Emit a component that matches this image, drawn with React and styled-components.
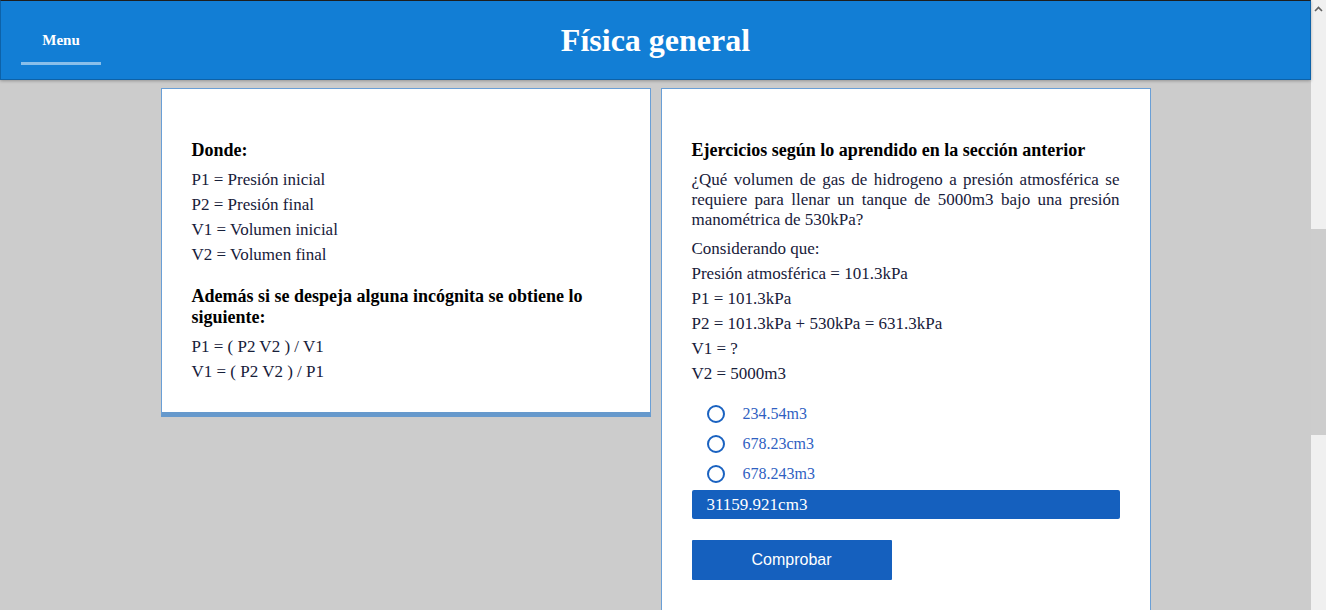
import React from "react";
import styled, { createGlobalStyle } from "styled-components";

const Global = createGlobalStyle`
  html, body { margin: 0; padding: 0; height: 100%; overflow: hidden; }
  body { background: #cccccc; font-family: "Liberation Serif", "Times New Roman", serif; }
`;

const Page = styled.div`
  display: flex;
  height: 100vh;
`;

const Main = styled.div`
  flex: 1;
  min-width: 0;
  display: flex;
  flex-direction: column;
`;

const Header = styled.header`
  position: relative;
  z-index: 1;
  flex: none;
  height: 80px;
  box-sizing: border-box;
  background: #127ed5;
  border: 1px solid #0d62a8;
  border-top-color: #1e1e1e;
  box-shadow: 0 1px 3px rgba(0, 0, 0, 0.28);
  display: grid;
  grid-template-columns: 1fr auto 1fr;
  align-items: center;
`;

const MenuButton = styled.div`
  justify-self: start;
  align-self: start;
  margin-left: 20px;
  width: 80px;
  height: 64px;
  box-sizing: border-box;
  padding-top: 28px;
  border-bottom: 3px solid rgba(255, 255, 255, 0.5);
  color: #fff;
  font-weight: bold;
  font-size: 15px;
  text-align: center;
  line-height: 22px;
`;

const Title = styled.h1`
  margin: 0;
  color: #fff;
  font-size: 32px;
  font-weight: bold;
  padding-top: 1px;
`;

const Columns = styled.div`
  display: flex;
  justify-content: center;
  align-items: flex-start;
  gap: 10px;
  padding-top: 8px;
`;

const Card = styled.section`
  width: 490px;
  box-sizing: border-box;
  background: #fff;
  border: 1px solid #6a9fd6;
  border-bottom: ${(p) => (p.$accent ? "5px solid #6699cc" : "1px solid #6a9fd6")};
  padding: 30px 30px ${(p) => (p.$accent ? "25px" : "40px")};
  color: #17203a;
`;

const Heading = styled.h3`
  margin: 21px 0 9px;
  font-size: 18px;
  line-height: 21px;
  font-weight: bold;
  color: #000;
`;

const Line = styled.p`
  margin: 0 0 ${(p) => (p.$justify ? "9px" : "5px")};
  font-size: 17px;
  line-height: 20px;
  text-align: ${(p) => (p.$justify ? "justify" : "left")};
`;

const Options = styled.div`
  display: flex;
  flex-direction: column;
  margin-top: 15px;
`;

const Option = styled.div`
  display: flex;
  align-items: center;
  height: 30px;
  box-sizing: border-box;
  padding-left: 15px;
  gap: 18px;
  font-size: 16px;
  color: #2f5fc2;
  border-radius: 2px;
  background: ${(p) => (p.$selected ? "#1560be" : "transparent")};
  ${(p) => p.$selected && "color: #fff; margin-top: 1px; height: 29px; font-size: 17px;"}
`;

const Radio = styled.span`
  width: 18px;
  height: 18px;
  box-sizing: border-box;
  border: 2px solid #1a62c0;
  border-radius: 50%;
  flex: none;
`;

const CheckButton = styled.button`
  margin-top: 21px;
  width: 200px;
  height: 40px;
  border: none;
  border-radius: 1px;
  background: #1560be;
  color: #fff;
  font-family: "Liberation Sans", Arial, sans-serif;
  font-size: 16px;
  cursor: pointer;
`;

const ScrollTrack = styled.div`
  width: 15px;
  flex: none;
  height: 100vh;
  background: #f0f0f0;
  display: flex;
  flex-direction: column;
  align-items: center;
`;

const ScrollArrow = styled.div`
  height: 17px;
  display: flex;
  align-items: center;
  justify-content: center;
`;

const ScrollThumb = styled.div`
  margin-top: 212px;
  width: 15px;
  height: 206px;
  background: #cdcdcd;
`;

export default function App() {
  const options = ["234.54m3", "678.23cm3", "678.243m3"];
  return (
    <>
      <Global />
      <Page>
        <Main>
          <Header>
            <MenuButton>Menu</MenuButton>
            <Title>Física general</Title>
            <div />
          </Header>
          <Columns>
            <Card $accent>
              <Heading>Donde:</Heading>
              <Line>P1 = Presión inicial</Line>
              <Line>P2 = Presión final</Line>
              <Line>V1 = Volumen inicial</Line>
              <Line>V2 = Volumen final</Line>
              <Heading>Además si se despeja alguna incógnita se obtiene lo siguiente:</Heading>
              <Line>P1 = ( P2 V2 ) / V1</Line>
              <Line>V1 = ( P2 V2 ) / P1</Line>
            </Card>
            <Card>
              <Heading>Ejercicios según lo aprendido en la sección anterior</Heading>
              <Line $justify>
                ¿Qué volumen de gas de hidrogeno a presión atmosférica se requiere para llenar un
                tanque de 5000m3 bajo una presión manométrica de 530kPa?
              </Line>
              <Line>Considerando que:</Line>
              <Line>Presión atmosférica = 101.3kPa</Line>
              <Line>P1 = 101.3kPa</Line>
              <Line>P2 = 101.3kPa + 530kPa = 631.3kPa</Line>
              <Line>V1 = ?</Line>
              <Line>V2 = 5000m3</Line>
              <Options>
                {options.map((o) => (
                  <Option key={o}>
                    <Radio />
                    {o}
                  </Option>
                ))}
                <Option $selected>31159.921cm3</Option>
              </Options>
              <CheckButton>Comprobar</CheckButton>
            </Card>
          </Columns>
        </Main>
        <ScrollTrack>
          <ScrollArrow>
            <svg width="9" height="6" viewBox="0 0 9 6">
              <path d="M1 5 L4.5 1.5 L8 5" fill="none" stroke="#606060" strokeWidth="1.6" />
            </svg>
          </ScrollArrow>
          <ScrollThumb />
        </ScrollTrack>
      </Page>
    </>
  );
}
